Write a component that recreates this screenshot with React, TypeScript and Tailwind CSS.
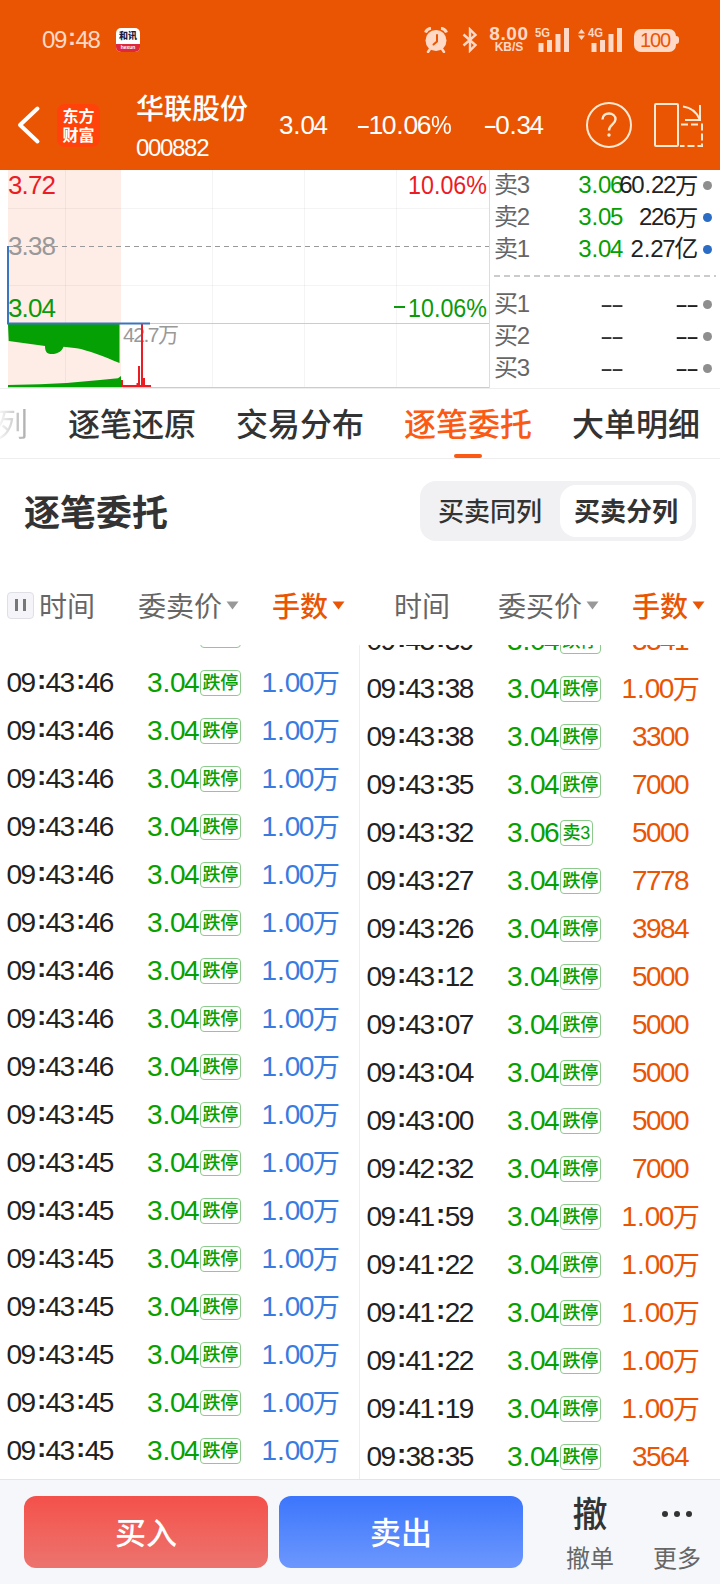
import clsx from "clsx";

type Order = {
  time: string;
  price: string;
  tag: string;
  qty: string;
};

type Quote = {
  label: string;
  price: string;
  volume: string;
  active: boolean;
};

const SELL_ORDERS: Order[] = [
  { time: "", price: "", tag: "跌停", qty: "" },
  ...Array.from({ length: 9 }, () => ({ time: "09:43:46", price: "3.04", tag: "跌停", qty: "1.00万" })),
  ...Array.from({ length: 8 }, () => ({ time: "09:43:45", price: "3.04", tag: "跌停", qty: "1.00万" })),
];

const BUY_ORDERS: Order[] = [
  { time: "09:43:39", price: "3.04", tag: "跌停", qty: "3341" },
  { time: "09:43:38", price: "3.04", tag: "跌停", qty: "1.00万" },
  { time: "09:43:38", price: "3.04", tag: "跌停", qty: "3300" },
  { time: "09:43:35", price: "3.04", tag: "跌停", qty: "7000" },
  { time: "09:43:32", price: "3.06", tag: "卖3", qty: "5000" },
  { time: "09:43:27", price: "3.04", tag: "跌停", qty: "7778" },
  { time: "09:43:26", price: "3.04", tag: "跌停", qty: "3984" },
  { time: "09:43:12", price: "3.04", tag: "跌停", qty: "5000" },
  { time: "09:43:07", price: "3.04", tag: "跌停", qty: "5000" },
  { time: "09:43:04", price: "3.04", tag: "跌停", qty: "5000" },
  { time: "09:43:00", price: "3.04", tag: "跌停", qty: "5000" },
  { time: "09:42:32", price: "3.04", tag: "跌停", qty: "7000" },
  { time: "09:41:59", price: "3.04", tag: "跌停", qty: "1.00万" },
  { time: "09:41:22", price: "3.04", tag: "跌停", qty: "1.00万" },
  { time: "09:41:22", price: "3.04", tag: "跌停", qty: "1.00万" },
  { time: "09:41:22", price: "3.04", tag: "跌停", qty: "1.00万" },
  { time: "09:41:19", price: "3.04", tag: "跌停", qty: "1.00万" },
  { time: "09:38:35", price: "3.04", tag: "跌停", qty: "3564" },
];

const ASKS: Quote[] = [
  { label: "卖3", price: "3.06", volume: "60.22万", active: false },
  { label: "卖2", price: "3.05", volume: "226万", active: true },
  { label: "卖1", price: "3.04", volume: "2.27亿", active: true },
];

const BIDS: Quote[] = [
  { label: "买1", price: "--", volume: "--", active: false },
  { label: "买2", price: "--", volume: "--", active: false },
  { label: "买3", price: "--", volume: "--", active: false },
];

const TABS = ["逐笔还原", "交易分布", "逐笔委托", "大单明细"];

// 数字: 字距收紧，冒号和小数点单独留宽
function Num({ children, className }: { children: string; className?: string }) {
  return (
    <span className={clsx("inline-block whitespace-nowrap tracking-[-0.055em]", className)}>
      {children.split(/([:.%万-])/).map((part, i) => {
        if (part === ":") return <span key={i} className="relative -top-[0.11em] px-[0.085em] font-bold tracking-[-0.11em]">:</span>;
        if (part === ".") return <span key={i} className="px-[0.05em]">.</span>;
        if (part === "-") return <span key={i} className="mr-[0.19em] inline-block origin-left scale-x-[1.65]">-</span>;
        if (part === "%") return <span key={i} className="-mr-[0.02em] ml-[0.03em] inline-block origin-left scale-x-[0.88]">%</span>;
        if (part === "万") return <span key={i} className="relative top-[0.05em] text-[0.97em]">万</span>;
        return part;
      })}
    </span>
  );
}

function Signal({ label, arrows }: { label: string; arrows?: boolean }) {
  return (
    <svg width="46" height="26" viewBox="0 0 46 26" fill="#ffd9c6">
      {arrows && <path d="M0 6.500 3.500 2 7 6.500ZM0 8.500h7L3.500 13Z" />}
      <text x={arrows ? 10 : 1} y="10" fontSize="13.5" fontWeight="700" textLength="15" lengthAdjust="spacingAndGlyphs">
        {label}
      </text>
      <g transform={arrows ? "translate(9 0)" : "translate(0 0)"}>
        <rect x="4.500" y="16" width="5" height="9" />
        <rect x="13" y="13" width="5" height="12" />
        <rect x="21.500" y="7" width="5" height="18" />
        <rect x="30" y="1" width="5" height="24" />
      </g>
    </svg>
  );
}

function StatusBar() {
  return (
    <div className="flex h-20 items-center pl-[42px] text-[#ffd9c6]">
      <Num className="w-[74px] text-[24px] leading-8">09:48</Num>
      <div className="flex size-6 flex-col overflow-hidden rounded-[5px] bg-white text-center">
        <span className="h-4 text-[9px] leading-4 font-black text-[#1d1b3c]">和讯</span>
        <span className="h-2 bg-[#e0283c] text-[5px] leading-[7px] font-bold text-white">hexun</span>
      </div>
      <svg className="ml-[284px]" width="24" height="26" viewBox="0 0 24 26" fill="none">
        <circle cx="12" cy="13.500" r="10.500" fill="#ffd9c6" />
        <path d="M1.500 5.500C2.500 3 4.500 1.500 7 1.300M22.500 5.500C21.500 3 19.500 1.500 17 1.300" stroke="#ffd9c6" strokeWidth="3" />
        <path d="M6 22 4 25M18 22l2 3" stroke="#ffd9c6" strokeWidth="2.500" strokeLinecap="round" />
        <path d="M13 8v6.500l-3.500 3" stroke="#ea5504" strokeWidth="2" strokeLinecap="round" />
      </svg>
      <svg className="ml-[14px]" width="16" height="26" viewBox="0 0 16 26" fill="none" stroke="#ffd9c6" strokeWidth="2.400">
        <path d="M1.500 7.500 13.500 18 8 23.500V2.500L13.500 8 1.500 18.500" />
      </svg>
      <div className="ml-[10px] flex w-[42px] flex-col items-center font-bold">
        <span className="text-[19px] leading-[14px] tracking-[0.03em]">8.00</span>
        <span className="text-[12px] leading-[12px]">KB/S</span>
      </div>
      <div className="ml-[4px]"><Signal label="5G" /></div>
      <div className="-ml-[2px]"><Signal label="4G" arrows /></div>
      <div className="ml-[10px] flex h-[23px] w-[42px] items-center justify-center rounded-[7px] bg-[#ffd9c6] text-[20px] leading-[23px] text-[#ea5504]">
        <Num>100</Num>
      </div>
      <div className="h-2 w-[3px] rounded-r-sm bg-[#ffd9c6]" />
    </div>
  );
}

function StockHeader() {
  return (
    <div className="flex h-[90px] items-center pl-[17px] text-white">
      <svg width="24" height="40" viewBox="0 0 24 40" fill="none" stroke="#fff" strokeWidth="4" strokeLinecap="round">
        <path d="M20.500 3.500 3 20l17.500 16.500" strokeLinejoin="round" />
      </svg>
      <div className="ml-4 flex h-[43px] w-[43px] flex-col items-center justify-center rounded-lg bg-[#ff420a] font-['Noto_Sans_CJK_SC'] text-[16px] leading-[19px] font-bold">
        <span>东方</span>
        <span>财富</span>
      </div>
      <div className="ml-[36px] flex w-[143px] flex-col pt-[7px]">
        <span className="text-[28px] leading-[38px] font-medium">华联股份</span>
        <Num className="text-[24px] leading-[38px]">000882</Num>
      </div>
      <Num className="w-[77px] text-[26px] leading-10">3.04</Num>
      <Num className="w-[127px] text-[26.5px] leading-10">-10.06%</Num>
      <Num className="w-[102px] text-[26px] leading-10">-0.34</Num>
      <svg width="48" height="48" viewBox="0 0 48 48" fill="none" stroke="#ffe9d2">
        <circle cx="24" cy="24" r="22" strokeWidth="2" />
        <path d="M17.500 18.500c0-4 3-6 6.500-6s6.500 2.200 6.500 5.800c0 5-6.500 5.400-6.500 11.200" strokeWidth="2.400" />
        <circle cx="24" cy="34" r="1.700" fill="#ffe9d2" strokeWidth="0" />
      </svg>
      <svg className="ml-5" width="52" height="48" viewBox="0 0 52 48" fill="none" stroke="#ffe9d2" strokeWidth="2">
        <rect x="2" y="3" width="23" height="42" rx="1" />
        <path d="M30 5.500c7 1 13.500 5.500 16.500 12.500M47 4v15H32" />
        <path d="M28 23.500h21V45H27" strokeDasharray="7 3" />
      </svg>
    </div>
  );
}

function TrendChart() {
  return (
    <svg className="shrink-0" width="490" height="219" viewBox="0 170 490 219" fontSize="26">
      <rect x="8" y="170" width="113" height="217" fill="#feece7" />
      <path d="M65.500 170v217M212.500 170v217M304.500 170v217M396.500 170v217M8 208.500h481M8 285.500h481" stroke="#000" strokeOpacity="0.045" />
      <path d="M8 323.500h481M8 387.500h481" stroke="#ccc" />
      <path d="M489.500 170v218" stroke="#ddd" />
      <path d="M8 246.500h481" stroke="#999" strokeDasharray="5 4" />
      <text x="8" y="194" fill="#ec1c24" textLength="48">3.72</text>
      <text x="8" y="255" fill="#999" textLength="48">3.38</text>
      <text x="8" y="317" fill="#0a9a0a" textLength="48">3.04</text>
      <text x="408" y="194" fill="#ec1c24" textLength="79" lengthAdjust="spacingAndGlyphs">10.06%</text>
      <text x="408" y="317" fill="#0a9a0a" textLength="79" lengthAdjust="spacingAndGlyphs">10.06%</text>
      <path d="M394 307h11" stroke="#0a9a0a" strokeWidth="2" />
      <path d="M8 324H119.500V363C112 360 104 356.500 96.700 354C89 351.500 82 349 76.700 348.300L63.500 346.700C62 351 58 354 51.700 354C48 354 45 353 45 346L8.700 341Z" fill="#04a004" />
      <path d="M8 385 40 384.300 66.700 383 100 380 118 378.300 121 376V387H8Z" fill="#04a004" />
      <text x="123" y="342" fill="#999" fontSize="21" textLength="56">42.7万</text>
      <path d="M121 386h30" stroke="#ec1c24" strokeWidth="2" />
      <path d="M122 380v6M137.500 383v3M139 366v20M142 324v62M144 378v8" stroke="#ec1c24" strokeWidth="2" />
      <path d="M8 246v77.500h142" stroke="#3a76bd" strokeWidth="2" fill="none" />
    </svg>
  );
}

function QuoteRow({ quote }: { quote: Quote }) {
  const empty = quote.price === "--";
  return (
    <div className="flex h-8 items-center text-[24px] leading-8">
      <Num className="w-12 text-[#666]">{quote.label}</Num>
      <Num className={clsx("w-[80px] text-right", empty ? "text-[#333]" : "text-[#04a004]")}>{quote.price}</Num>
      <div className="flex w-[75px] justify-end text-[#222]">
        <Num className="shrink-0">{quote.volume}</Num>
      </div>
      <span className={clsx("ml-[6px] size-[9px] rounded-full", quote.active ? "bg-[#2b6cc4]" : "bg-[#8e8e8e]")} />
    </div>
  );
}

function Triangle({ className }: { className: string }) {
  return (
    <svg className={className} width="13" height="9" viewBox="0 0 13 9" fill="currentColor">
      <path d="M0.500 0.500h12L6.500 8.500Z" />
    </svg>
  );
}

function ListHead({ priceLabel, paused }: { priceLabel: string; paused?: boolean }) {
  return (
    <div className="flex h-10 w-[360px] items-center text-[28px] leading-10 text-[#666]">
      <div className={clsx("flex w-[138px] items-center", paused ? "pl-[7px]" : "pl-[34px]")}>
        {paused && (
          <span className="mr-[5px] flex size-[27px] items-center justify-center gap-[5px] rounded border border-[#dfe0e6] bg-[#f5f5f9]">
            <i className="h-3 w-[3px] bg-[#777]" />
            <i className="h-3 w-[3px] bg-[#777]" />
          </span>
        )}
        <span className="pt-[5px]">时间</span>
      </div>
      <div className="flex w-[134px] items-center">
        <span className="pt-[5px]">{priceLabel}</span>
        <Triangle className="ml-1 text-[#999]" />
      </div>
      <div className="flex items-center font-medium text-[#e95504]">
        <span className="pt-[5px]">手数</span>
        <Triangle className="ml-1" />
      </div>
    </div>
  );
}

function OrderRow({ order, side }: { order: Order; side: "sell" | "buy" }) {
  return (
    <li className="flex h-12 items-center pl-[6.500px] text-[28px] leading-[48px]">
      <Num className="w-[140.500px] text-[#222]">{order.time}</Num>
      <div className="flex w-[94px] items-center text-[#04a004]">
        <Num className="w-[53px]">{order.price}</Num>
        <span className="flex h-[26px] items-center rounded-[4px] border border-[#8ccb8c] px-[1.500px] text-[18px] leading-6 font-medium tracking-[-0.01em] whitespace-nowrap">
          {order.tag}
        </span>
      </div>
      <Num className={clsx("w-[118px] text-center", side === "sell" ? "text-[#3a7be0]" : "text-[#ea5504]")}>
        {order.qty}
      </Num>
    </li>
  );
}

export default function App() {
  return (
    <div className="flex h-[1584px] w-[720px] flex-col overflow-hidden bg-white font-['Liberation_Sans','Noto_Sans_CJK_SC',sans-serif]">
      <header className="h-[170px] shrink-0 bg-[#ea5504]">
        <StatusBar />
        <StockHeader />
      </header>

      {/* 分时图 + 五档 */}
      <section className="flex h-[219px] shrink-0 overflow-hidden border-b border-[#eee]">
        <TrendChart />
        <div className="-mt-px flex-1 pl-1">
          {ASKS.map((q) => <QuoteRow key={q.label} quote={q} />)}
          <svg className="mt-[10px] mb-[11px] block" width="222" height="2">
            <path d="M0 1h222" stroke="#bbb" strokeWidth="1.500" strokeDasharray="6 4" />
          </svg>
          {BIDS.map((q) => <QuoteRow key={q.label} quote={q} />)}
        </div>
      </section>

      {/* 标签栏 */}
      <nav className="-mt-px flex h-[71px] shrink-0 gap-10 border-b border-[#eee] text-[32px] leading-[75px] font-medium text-[#333]">
        <span className="-ml-1 w-8 bg-linear-to-r from-white to-[#aaa] bg-clip-text font-normal text-transparent">列</span>
        {TABS.map((tab) => (
          <div key={tab} className={clsx("flex w-32 flex-col items-center whitespace-nowrap", tab === "逐笔委托" && "text-[#fa5a14]")}>
            <span className="h-[66px]">{tab}</span>
            {tab === "逐笔委托" && <span className="h-1 w-7 shrink-0 rounded-full bg-[#fa5a14]" />}
          </div>
        ))}
      </nav>

      <div className="mt-[22px] flex h-[60px] shrink-0 items-center justify-between pr-6 pl-6">
        <h1 className="pt-[5px] text-[36px] leading-[60px] font-bold text-[#333]">逐笔委托</h1>
        <div className="flex h-[60px] w-[276px] items-center rounded-2xl bg-[#f1f1f4] p-1 text-[26px] leading-[54px] text-[#333]">
          <span className="h-[52px] w-[132px] text-center font-medium whitespace-nowrap">买卖同列</span>
          <span className="ml-[4px] h-[52px] w-[132px] rounded-2xl bg-white text-center font-bold whitespace-nowrap">买卖分列</span>
        </div>
      </div>

      <div className="mt-[44px] flex shrink-0">
        <ListHead priceLabel="委卖价" paused />
        <ListHead priceLabel="委买价" />
      </div>

      {/* 委托明细 */}
      <div className="mt-5 flex h-[834px] shrink-0 overflow-hidden">
        <ul className="-mt-[34px] w-[360px] shrink-0">
          {SELL_ORDERS.map((o, i) => <OrderRow key={i} order={o} side="sell" />)}
        </ul>
        <div className="-ml-px w-px bg-[#eee]" />
        <ul className="-mt-[28px] w-[360px] shrink-0">
          {BUY_ORDERS.map((o, i) => <OrderRow key={i} order={o} side="buy" />)}
        </ul>
      </div>

      {/* 底部操作 */}
      <footer className="flex flex-1 border-t border-[#e3e5e8] bg-[#f5f7fa] pt-4 pl-6 text-[#333]">
        <button className="h-[72px] w-[244px] rounded-xl bg-linear-to-b from-[#f4504a] to-[#ec736e] pt-1 text-[31px] font-medium text-white">
          买入
        </button>
        <button className="ml-[11px] h-[72px] w-[244px] rounded-xl bg-linear-to-b from-[#3c75fc] to-[#6c97fd] pt-1 text-[31px] font-medium text-white">
          卖出
        </button>
        <div className="ml-[37px] flex w-[60px] flex-col items-center">
          <span className="h-[44px] text-[35px] leading-[37px] font-medium">撤</span>
          <span className="text-[24px] leading-[38px] whitespace-nowrap text-[#666]">撤单</span>
        </div>
        <div className="ml-[27px] flex w-[60px] flex-col items-center">
          <span className="flex h-[44px] items-start gap-[6px] pt-[15px]">
            <i className="size-[6px] rounded-full bg-[#333]" />
            <i className="size-[6px] rounded-full bg-[#333]" />
            <i className="size-[6px] rounded-full bg-[#333]" />
          </span>
          <span className="text-[24px] leading-[38px] whitespace-nowrap text-[#666]">更多</span>
        </div>
      </footer>
    </div>
  );
}
